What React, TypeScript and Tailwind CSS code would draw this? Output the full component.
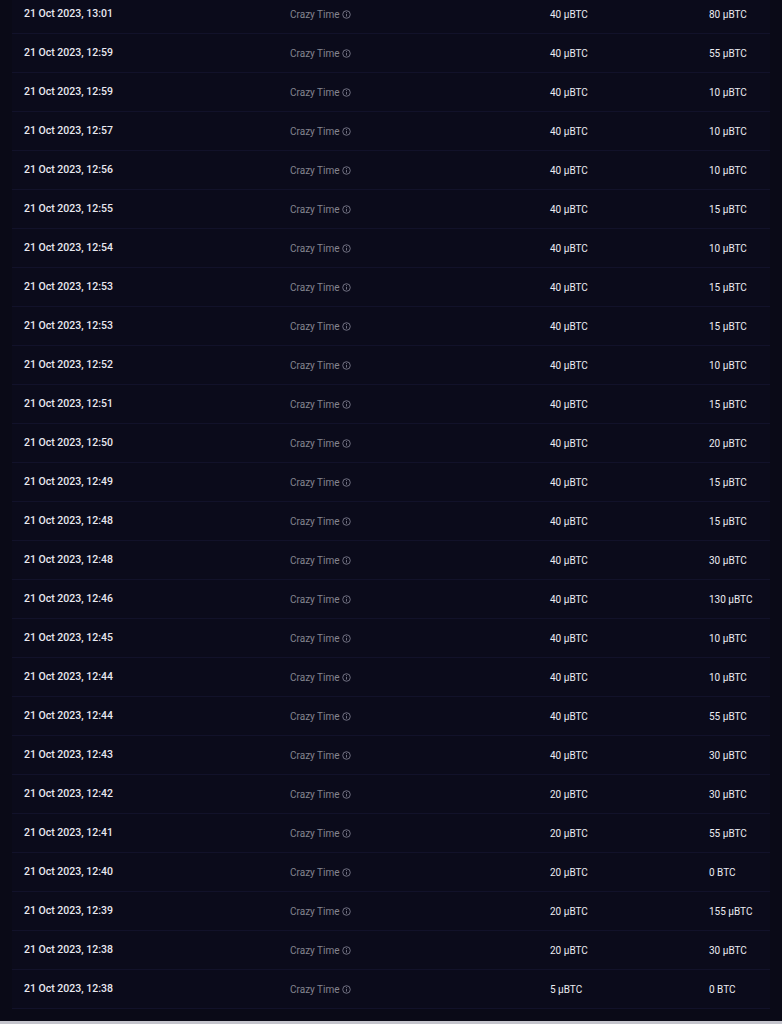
import React from "react";

const rows: [string, string, string][] = [
  ["13:01", "40 μBTC", "80 μBTC"],
  ["12:59", "40 μBTC", "55 μBTC"],
  ["12:59", "40 μBTC", "10 μBTC"],
  ["12:57", "40 μBTC", "10 μBTC"],
  ["12:56", "40 μBTC", "10 μBTC"],
  ["12:55", "40 μBTC", "15 μBTC"],
  ["12:54", "40 μBTC", "10 μBTC"],
  ["12:53", "40 μBTC", "15 μBTC"],
  ["12:53", "40 μBTC", "15 μBTC"],
  ["12:52", "40 μBTC", "10 μBTC"],
  ["12:51", "40 μBTC", "15 μBTC"],
  ["12:50", "40 μBTC", "20 μBTC"],
  ["12:49", "40 μBTC", "15 μBTC"],
  ["12:48", "40 μBTC", "15 μBTC"],
  ["12:48", "40 μBTC", "30 μBTC"],
  ["12:46", "40 μBTC", "130 μBTC"],
  ["12:45", "40 μBTC", "10 μBTC"],
  ["12:44", "40 μBTC", "10 μBTC"],
  ["12:44", "40 μBTC", "55 μBTC"],
  ["12:43", "40 μBTC", "30 μBTC"],
  ["12:42", "20 μBTC", "30 μBTC"],
  ["12:41", "20 μBTC", "55 μBTC"],
  ["12:40", "20 μBTC", "0 BTC"],
  ["12:39", "20 μBTC", "155 μBTC"],
  ["12:38", "20 μBTC", "30 μBTC"],
  ["12:38", "5 μBTC", "0 BTC"],
];

function InfoIcon() {
  return (
    <svg width="9" height="9" viewBox="0 0 10 10" className="ml-[2px] shrink-0">
      <circle cx="5" cy="5" r="4.2" fill="none" stroke="#7c7c8c" strokeWidth="1" />
      <line x1="5" y1="4.3" x2="5" y2="7.3" stroke="#7c7c8c" strokeWidth="1" />
      <circle cx="5" cy="2.9" r="0.6" fill="#7c7c8c" />
    </svg>
  );
}

export default function App() {
  return (
    <div
      className="w-[782px] h-[1024px] overflow-hidden bg-[#0a0a17] flex flex-col"
      style={{ fontFamily: "Roboto, 'Liberation Sans', sans-serif" }}
    >
      <div className="h-[1021px] overflow-hidden">
        <div className="mx-[12px] -mt-[5px] bg-[#0b0b1b]">
          {rows.map(([time, bet, pay], i) => (
            <div
              key={i}
              className="h-[39px] grid grid-cols-[266px_260px_159px_1fr] items-center pl-[12px] border-b border-[#12122a]"
            >
              <div className="text-[#e8e8f0] font-medium text-[10.5px]">21 Oct 2023, {time}</div>
              <div className="flex items-center text-[#84848f] text-[10px]">
                Crazy Time
                <InfoIcon />
              </div>
              <div className="text-[#ececf2] text-[10px]">{bet}</div>
              <div className="text-[#ececf2] text-[10px]">{pay}</div>
            </div>
          ))}
        </div>
      </div>
      <div className="h-[3px] bg-[#c4c4cc]" />
    </div>
  );
}
